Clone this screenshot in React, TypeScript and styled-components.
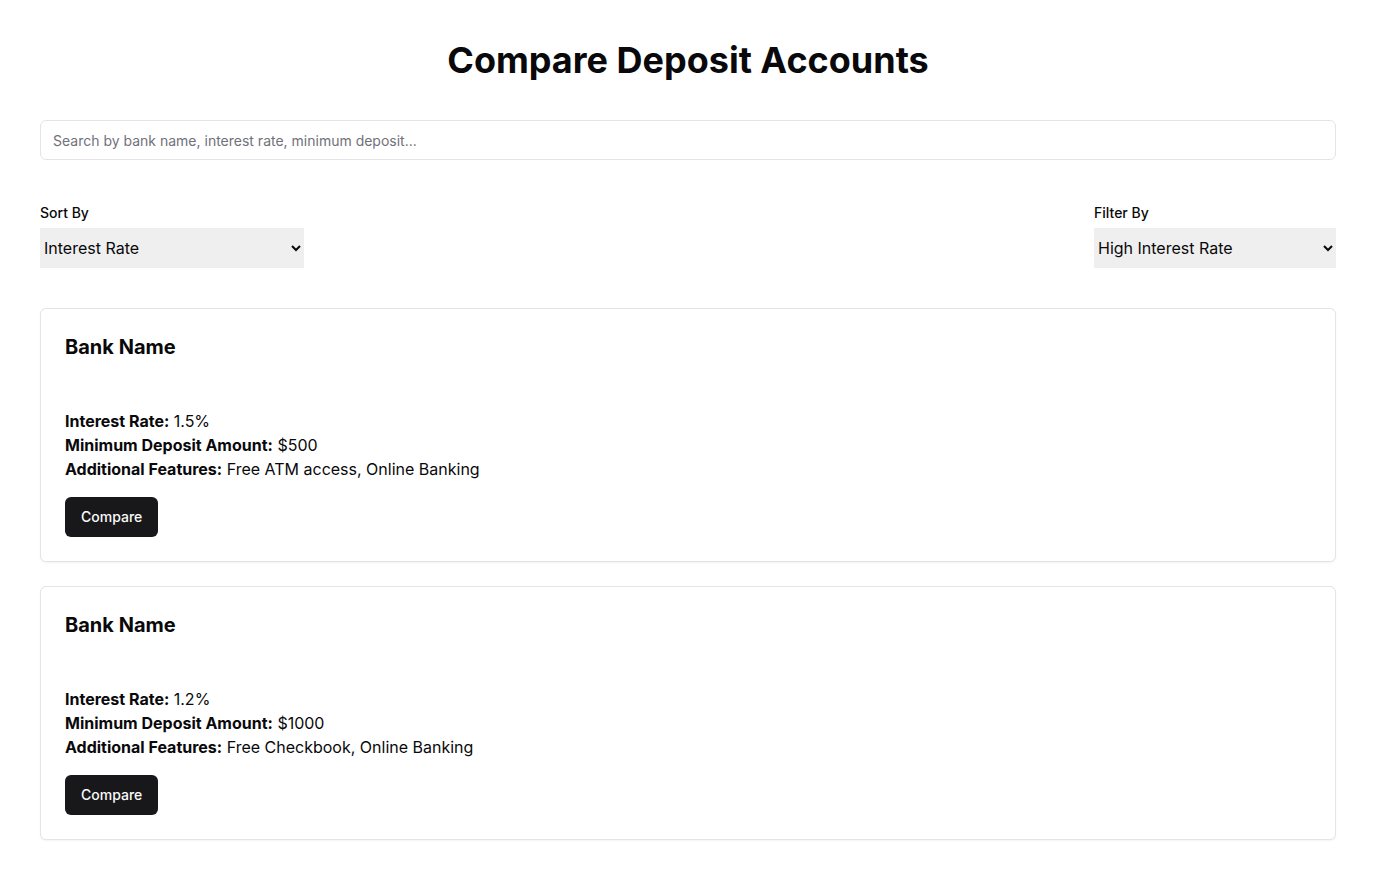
import React from "react";
import styled, { createGlobalStyle } from "styled-components";

const Global = createGlobalStyle`
  * { box-sizing: border-box; }
  body {
    margin: 0;
    background: #ffffff;
    color: #09090b;
    font-family: Inter, "Liberation Sans", sans-serif;
  }
`;

const Page = styled.main`
  padding: 40px 40px 40px;
  display: flex;
  flex-direction: column;
`;

const Title = styled.h1`
  margin: 0;
  font-size: 36px;
  line-height: 40px;
  font-weight: 700;
  text-align: center;
  color: #09090b;
`;

const Search = styled.input`
  margin-top: 40px;
  height: 40px;
  width: 100%;
  border: 1px solid #e4e4e7;
  border-radius: 6px;
  padding: 0 12px;
  font-family: inherit;
  font-size: 14px;
  color: #09090b;
  background: #fff;
  outline: none;
  &::placeholder { color: #71717a; }
`;

const Controls = styled.div`
  margin-top: 43px;
  display: flex;
  justify-content: space-between;
  align-items: flex-start;
`;

const Field = styled.div`
  display: flex;
  flex-direction: column;
  gap: 5px;
`;

const Label = styled.label`
  font-size: 14px;
  line-height: 20px;
  font-weight: 500;
  color: #09090b;
`;

const Select = styled.select<{ $w: number }>`
  width: ${(p) => p.$w}px;
  height: 40px;
  border: none;
  background: #efefef;
  font-family: inherit;
  font-size: 16px;
  color: #09090b;
  padding: 0;
  border-radius: 0;
`;

const List = styled.div`
  margin-top: 40px;
  display: flex;
  flex-direction: column;
  gap: 24px;
`;

const Card = styled.section`
  border: 1px solid #e4e4e7;
  border-radius: 6px;
  background: #fff;
  box-shadow: 0 1px 2px rgba(0, 0, 0, 0.05);
  padding: 24px;
  display: flex;
  flex-direction: column;
  align-items: flex-start;
`;

const BankName = styled.h2`
  margin: 0 0 48px;
  font-size: 20px;
  line-height: 28px;
  font-weight: 700;
  color: #09090b;
`;

const Detail = styled.p`
  margin: 0;
  font-size: 16px;
  line-height: 24px;
  color: #09090b;
  b { font-weight: 700; }
`;

const Button = styled.button`
  margin-top: 16px;
  height: 40px;
  padding: 0 16px 1px;
  border: none;
  border-radius: 6px;
  background: #18181b;
  color: #fafafa;
  font-family: inherit;
  font-size: 14px;
  font-weight: 500;
  cursor: pointer;
`;

const accounts = [
  { rate: "1.5%", min: "$500", features: "Free ATM access, Online Banking" },
  { rate: "1.2%", min: "$1000", features: "Free Checkbook, Online Banking" },
];

export default function App() {
  return (
    <>
      <Global />
      <Page>
        <Title>Compare Deposit Accounts</Title>
        <Search placeholder="Search by bank name, interest rate, minimum deposit..." />
        <Controls>
          <Field>
            <Label>Sort By</Label>
            <Select $w={264} defaultValue="rate">
              <option value="rate">Interest Rate</option>
              <option value="min">Minimum Deposit Amount</option>
              <option value="name">Bank Name</option>
            </Select>
          </Field>
          <Field>
            <Label>Filter By</Label>
            <Select $w={242} defaultValue="high">
              <option value="high">High Interest Rate</option>
              <option value="low">Low Minimum Deposit</option>
              <option value="atm">Free ATM access</option>
            </Select>
          </Field>
        </Controls>
        <List>
          {accounts.map((a, i) => (
            <Card key={i}>
              <BankName>Bank Name</BankName>
              <Detail><b>Interest Rate:</b> {a.rate}</Detail>
              <Detail><b>Minimum Deposit Amount:</b> {a.min}</Detail>
              <Detail><b>Additional Features:</b> {a.features}</Detail>
              <Button>Compare</Button>
            </Card>
          ))}
        </List>
      </Page>
    </>
  );
}
